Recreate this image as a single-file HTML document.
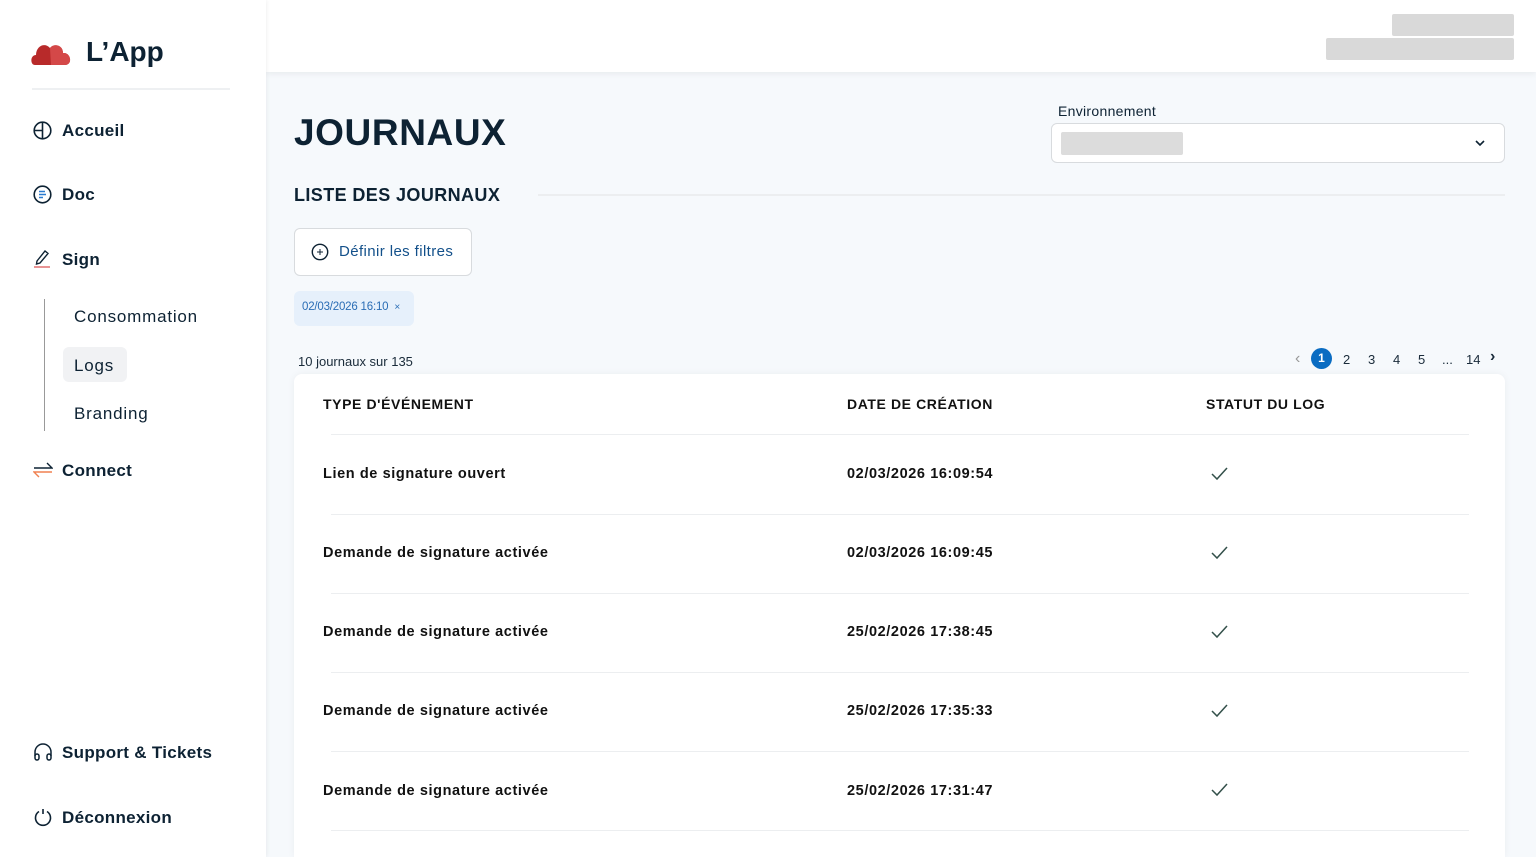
<!DOCTYPE html>
<html><head><meta charset="utf-8"><style>
*{margin:0;padding:0;box-sizing:border-box}
html,body{width:1536px;height:857px;overflow:hidden}
body{font-family:"Liberation Sans",sans-serif;background:#f6f9fc;color:#0d2233;position:relative}
.sb{position:absolute;left:0;top:0;width:266px;height:857px;background:#fff;box-shadow:1px 0 4px rgba(0,0,0,.06);z-index:2}
.hd{position:absolute;left:266px;top:0;width:1270px;height:72px;background:#fff;box-shadow:0 2px 6px rgba(0,0,0,.06)}
.a{position:absolute;white-space:nowrap}
.nav{font-size:17px;font-weight:bold;color:#0d2233;letter-spacing:.3px}
.sub{font-size:17px;color:#0d2233;letter-spacing:.8px}
.blur{position:absolute;background:#d9d9d9;border-radius:2px}
.card{position:absolute;left:294px;top:374px;width:1211px;height:483px;background:#fff;border-radius:8px 8px 0 0;box-shadow:0 0 8px rgba(0,0,0,.05);overflow:hidden}
.th{font-size:14px;font-weight:bold;letter-spacing:.6px;color:#111}
.td{font-size:14.5px;font-weight:bold;color:#111;letter-spacing:.6px}
.ln{position:absolute;left:37px;width:1138px;height:1px;background:#eceef0}
.pg{font-size:13px;color:#1a2b3a}
</style></head><body>
<div class="sb">
<svg class="a" style="left:31px;top:40px" width="41" height="26" viewBox="0 0 41 26"><path d="M4 25 C-1 25 -1 15 5 15 C5 6 14 2 19 8 C23 3 32 5 32 13 C40 12 42 25 34 25 Z" fill="#b82a2a"/><path d="M19 8 C23 3 32 5 32 13 C40 12 42 25 34 25 L20 25 Z" fill="#d44848"/></svg>
<div class="a" style="left:86px;top:36px;font-size:28px;font-weight:bold;color:#0d2233">L’App</div>
<div class="a" style="left:32px;top:88px;width:198px;height:2px;background:#eef0f2"></div>
<svg class="a" style="left:33px;top:121px" width="19" height="19" viewBox="0 0 19 19" fill="none" stroke="#0d2233" stroke-width="1.6"><circle cx="9.5" cy="9.5" r="8.3"/><path d="M9.5 1.2V17.8M1.2 9.5H9.5"/></svg>
<div class="a nav" style="left:62px;top:121px">Accueil</div>
<svg class="a" style="left:33px;top:185px" width="19" height="19" viewBox="0 0 19 19" fill="none"><circle cx="9.5" cy="9.5" r="8.3" stroke="#0d2233" stroke-width="1.6"/><path d="M6 6.5H12M6 9.5H13M6 12.5H10" stroke="#2b7bd0" stroke-width="1.6"/></svg>
<div class="a nav" style="left:62px;top:185px">Doc</div>
<svg class="a" style="left:33px;top:248px" width="19" height="20" viewBox="0 0 19 20" fill="none"><path d="M4 13 L12 3 L15 5.5 L7 15 L3.5 16 Z" stroke="#0d2233" stroke-width="1.4"/><path d="M1 19H17" stroke="#e07070" stroke-width="1.5"/></svg>
<div class="a nav" style="left:62px;top:250px">Sign</div>
<div class="a" style="left:44px;top:299px;width:1px;height:132px;background:#999"></div>
<div class="a sub" style="left:74px;top:307px">Consommation</div>
<div class="a" style="left:63px;top:347px;width:64px;height:35px;background:#f1f2f4;border-radius:6px"></div>
<div class="a sub" style="left:74px;top:356px">Logs</div>
<div class="a sub" style="left:74px;top:404px">Branding</div>
<svg class="a" style="left:33px;top:461px" width="20" height="18" viewBox="0 0 20 18" fill="none"><path d="M1 7H19L14 2" stroke="#0d2233" stroke-width="1.4"/><path d="M19 11H1L6 16" stroke="#f08050" stroke-width="1.4"/></svg>
<div class="a nav" style="left:62px;top:461px">Connect</div>
<svg class="a" style="left:33px;top:743px" width="20" height="18" viewBox="0 0 20 18" fill="none" stroke="#0d2233" stroke-width="1.5"><path d="M2 13V9a8 8 0 0 1 16 0v4"/><rect x="2" y="11" width="4" height="6" rx="2"/><rect x="14" y="11" width="4" height="6" rx="2"/></svg>
<div class="a nav" style="left:62px;top:743px">Support &amp; Tickets</div>
<svg class="a" style="left:34px;top:808px" width="18" height="19" viewBox="0 0 18 19" fill="none" stroke="#0d2233" stroke-width="1.6"><path d="M5 3.5A7.5 7.5 0 1 0 13 3.5"/><path d="M9 1V6"/></svg>
<div class="a nav" style="left:62px;top:808px">Déconnexion</div>
</div>
<div class="hd"></div>
<div class="blur" style="left:1392px;top:14px;width:122px;height:22px"></div>
<div class="blur" style="left:1326px;top:38px;width:188px;height:22px"></div>
<div class="a" style="left:294px;top:112px;font-size:37px;font-weight:bold;color:#0d2233;letter-spacing:.6px">JOURNAUX</div>
<div class="a" style="left:1058px;top:103px;font-size:14px;color:#0d2233;letter-spacing:.3px">Environnement</div>
<div class="a" style="left:1051px;top:123px;width:454px;height:40px;background:#fff;border:1px solid #d8dbde;border-radius:6px"></div>
<div class="blur" style="left:1061px;top:132px;width:122px;height:23px;background:#dcdcdc"></div>
<svg class="a" style="left:1474px;top:139px" width="12" height="8" viewBox="0 0 12 8"><path d="M2 2L6 6L10 2" fill="none" stroke="#0d2233" stroke-width="1.6"/></svg>
<div class="a" style="left:294px;top:185px;font-size:18px;font-weight:bold;color:#0d2233;letter-spacing:.4px">LISTE DES JOURNAUX</div>
<div class="a" style="left:538px;top:194px;width:967px;height:2px;background:#eceef0"></div>
<div class="a" style="left:294px;top:228px;width:178px;height:48px;background:#fff;border:1px solid #d8dbde;border-radius:6px"></div>
<svg class="a" style="left:311px;top:243px" width="18" height="18" viewBox="0 0 18 18" fill="none" stroke="#0d2233" stroke-width="1.4"><circle cx="9" cy="9" r="7.7"/><path d="M9 6V12M6 9H12" stroke-width="1"/></svg>
<div class="a" style="left:339px;top:243px;font-size:15px;color:#13508a;letter-spacing:.4px">Définir les filtres</div>
<div class="a" style="left:294px;top:291px;width:120px;height:35px;background:#e6f0fb;border-radius:6px"></div>
<div class="a" style="left:302px;top:301px;font-size:11.5px;color:#2a6db5;letter-spacing:-.2px">02/03/2026 16:10 &nbsp;<span style="font-size:10px">×</span></div>
<div class="a" style="left:298px;top:354px;font-size:13px;color:#1a2b3a">10 journaux sur 135</div>
<div class="a pg" style="left:1295px;top:350px;color:#999;font-size:16px">‹</div>
<div class="a" style="left:1311px;top:348px;width:21px;height:21px;border-radius:50%;background:#0a6cc2;color:#fff;font-size:12px;font-weight:bold;text-align:center;line-height:21px">1</div>
<div class="a pg" style="left:1343px;top:352px">2</div>
<div class="a pg" style="left:1368px;top:352px">3</div>
<div class="a pg" style="left:1393px;top:352px">4</div>
<div class="a pg" style="left:1418px;top:352px">5</div>
<div class="a pg" style="left:1442px;top:352px">...</div>
<div class="a pg" style="left:1466px;top:352px">14</div>
<div class="a pg" style="left:1490px;top:348px;font-weight:bold;font-size:16px">›</div>
<div class="card">
<div class="a th" style="left:29px;top:22px">TYPE D'ÉVÉNEMENT</div>
<div class="a th" style="left:553px;top:22px">DATE DE CRÉATION</div>
<div class="a th" style="left:912px;top:22px">STATUT DU LOG</div>
<div class="ln" style="top:60px"></div>
<div class="a td" style="left:29px;top:92px">Lien de signature ouvert</div><div class="a td" style="left:553px;top:92px">02/03/2026 16:09:54</div>
<div class="ln" style="top:140px"></div>
<div class="a td" style="left:29px;top:171px">Demande de signature activée</div><div class="a td" style="left:553px;top:171px">02/03/2026 16:09:45</div>
<div class="ln" style="top:219px"></div>
<div class="a td" style="left:29px;top:250px">Demande de signature activée</div><div class="a td" style="left:553px;top:250px">25/02/2026 17:38:45</div>
<div class="ln" style="top:298px"></div>
<div class="a td" style="left:29px;top:329px">Demande de signature activée</div><div class="a td" style="left:553px;top:329px">25/02/2026 17:35:33</div>
<div class="ln" style="top:377px"></div>
<div class="a td" style="left:29px;top:409px">Demande de signature activée</div><div class="a td" style="left:553px;top:409px">25/02/2026 17:31:47</div>
<div class="ln" style="top:456px"></div>
<svg class="a" style="left:917px;top:93px" width="17" height="14" viewBox="0 0 17 14"><path d="M1 7L6 12L16 1" fill="none" stroke="#33504a" stroke-width="1.5"/></svg>
<svg class="a" style="left:917px;top:172px" width="17" height="14" viewBox="0 0 17 14"><path d="M1 7L6 12L16 1" fill="none" stroke="#33504a" stroke-width="1.5"/></svg>
<svg class="a" style="left:917px;top:251px" width="17" height="14" viewBox="0 0 17 14"><path d="M1 7L6 12L16 1" fill="none" stroke="#33504a" stroke-width="1.5"/></svg>
<svg class="a" style="left:917px;top:330px" width="17" height="14" viewBox="0 0 17 14"><path d="M1 7L6 12L16 1" fill="none" stroke="#33504a" stroke-width="1.5"/></svg>
<svg class="a" style="left:917px;top:409px" width="17" height="14" viewBox="0 0 17 14"><path d="M1 7L6 12L16 1" fill="none" stroke="#33504a" stroke-width="1.5"/></svg>
</div>
</body></html>
